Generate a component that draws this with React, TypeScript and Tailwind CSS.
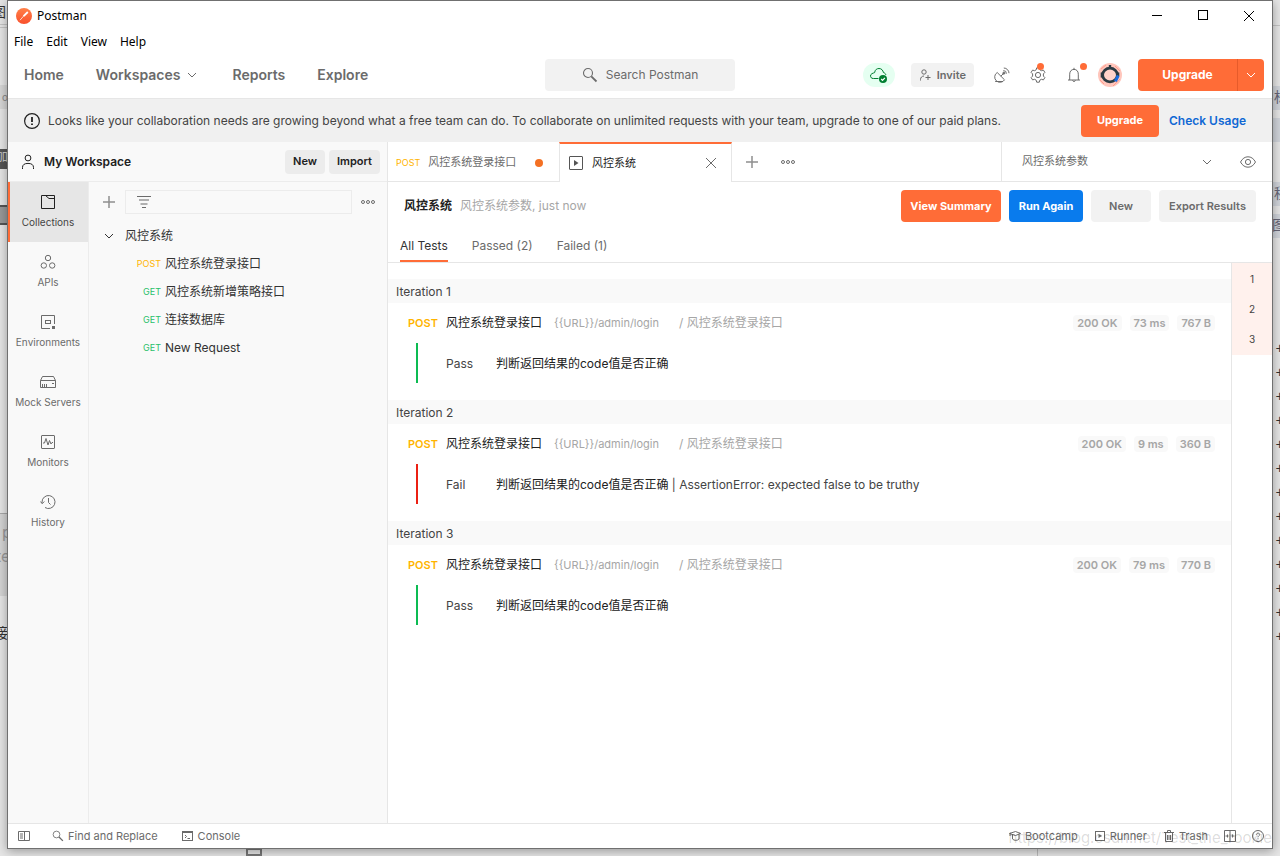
import { FC, ReactNode } from "react";

interface IconProps {
	className?: string;
	size?: number;
	children: ReactNode;
}

const Icon: FC<IconProps> = ({ className = "", size = 16, children }) => (
	<svg
		width={size}
		height={size}
		viewBox={`0 0 ${size} ${size}`}
		fill="none"
		stroke="currentColor"
		strokeWidth="1"
		className={`shrink-0 ${className}`}
		aria-hidden="true"
	>
		{children}
	</svg>
);

const ChevronIcon: FC<{ className?: string }> = ({ className }) => (
	<Icon className={className}>
		<path d="M4 6 L8 10 L12 6" />
	</Icon>
);

const SearchIcon: FC<{ className?: string; size?: number }> = ({ className, size = 16 }) => (
	<svg width={size} height={size} viewBox="0 0 16 16" fill="none" stroke="currentColor" className={className} aria-hidden="true">
		<circle cx="6" cy="6" r="4.5" strokeWidth="1.1" />
		<path d="M9.3 9.3 L14.5 14.5" strokeWidth="1.8" />
	</svg>
);

const PlusIcon: FC<{ className?: string }> = ({ className }) => (
	<Icon className={className}>
		<path d="M2 8 H14 M8 2 V14" strokeWidth="1.5" />
	</Icon>
);

const DotsIcon: FC<{ className?: string }> = ({ className }) => (
	<Icon className={className}>
		<circle cx="3" cy="8" r="1.5" />
		<circle cx="8" cy="8" r="1.5" />
		<circle cx="13" cy="8" r="1.5" />
	</Icon>
);

const CloseIcon: FC<{ className?: string }> = ({ className }) => (
	<Icon className={className}>
		<path d="M3 3 L13 13 M13 3 L3 13" />
	</Icon>
);

const LogoIcon = () => (
	<Icon>
		<defs>
			<linearGradient id="logo" x1="0" y1="0" x2="0" y2="1">
				<stop offset="0" stopColor="#ff8048" />
				<stop offset="1" stopColor="#f9502c" />
			</linearGradient>
		</defs>
		<circle cx="8" cy="8" r="8" fill="url(#logo)" stroke="none" />
		<path d="M4 12.2 L8.3 7.3" stroke="#ffd9c8" strokeWidth="1" />
		<path d="M7.6 8.2 L11.8 4" stroke="#fff" strokeWidth="1.8" />
	</Icon>
);

const CloudIcon = () => (
	<Icon size={18}>
		<path
			d="M8.5 12.5 H3.6 A2.6 2.6 0 0 1 2 7.6 C3 7 4 7 4.6 6.6 C5 3.6 7 2.5 9 2.5 C11.6 2.5 13 4.4 13.4 6.5 C15 7 15.8 8 15.8 9"
			stroke="#007f31"
		/>
		<circle cx="13" cy="13" r="4" fill="#007f31" stroke="none" />
		<path d="M11.2 13 L12.5 14.3 L14.9 11.8" stroke="#fff" strokeWidth="1.2" />
	</Icon>
);

const InviteIcon = () => (
	<Icon size={12}>
		<circle cx="5" cy="3" r="2.2" />
		<path d="M1.5 11.5 V10.5 C1.5 8.5 3 7 5 7 M9 6 V11 M6.5 8.5 H11.5" />
	</Icon>
);

const SatelliteIcon = () => (
	<Icon>
		<path d="M3.2 5.5 A5.3 5.3 0 1 0 10.5 12.8 Z M6.8 9.2 L9.4 6.6 M1.2 14.5 H9" />
		<circle cx="9.8" cy="6.2" r="1" fill="currentColor" />
		<path d="M9.3 3.6 A3 3 0 0 1 12.4 6.7 M9.8 1 A5.3 5.3 0 0 1 15 6.2" />
	</Icon>
);

const GearIcon = () => (
	<Icon>
		<path d="M6.7 0.8 H9.3 L9.8 2.8 L11.4 3.7 L13.4 3.1 L14.9 5.4 L13.4 6.9 V9.1 L14.9 10.6 L13.4 12.9 L11.4 12.3 L9.8 13.2 L9.3 15.2 H6.7 L6.2 13.2 L4.6 12.3 L2.6 12.9 L1.1 10.6 L2.6 9.1 V6.9 L1.1 5.4 L2.6 3.1 L4.6 3.7 L6.2 2.8 Z" />
		<circle cx="8" cy="8" r="2.6" />
	</Icon>
);

const BellIcon = () => (
	<Icon>
		<path d="M2 13 H14 M3.7 13 V7.2 C3.7 4.2 5.4 2.4 8 2.4 C10.6 2.4 12.3 4.2 12.3 7.2 V13 M8 2.4 V0.8 M6.5 13.4 A1.6 1.6 0 0 0 9.5 13.4" />
	</Icon>
);

const AvatarIcon = () => (
	<Icon size={24}>
		<circle cx="12" cy="12" r="12" fill="#ffc6bc" stroke="none" />
		<path d="M3 6 L8 2 M15 23 L22 16 M2 17 L6 21 M17 3 L22 8" stroke="#ff9d8c" />
		<path d="M12 2 V5" stroke="#2b3a42" strokeWidth="2.4" />
		<ellipse cx="12" cy="12" rx="7.4" ry="6.8" fill="#ffd3ca" stroke="#2b3a42" strokeWidth="2.8" />
		<path d="M3.5 9.5 V14.5 M20.5 9.5 V13" stroke="#2b3a42" strokeWidth="1.6" />
		<path d="M20.2 12.5 L17.4 18.4" stroke="#1a6ce0" strokeWidth="3" />
	</Icon>
);

const WarningIcon = () => (
	<Icon className="text-[#212121]">
		<circle cx="8" cy="8" r="7.4" strokeWidth="1.2" />
		<path d="M8 4 V9" strokeWidth="1.8" />
		<path d="M8 10.4 V12" strokeWidth="1.8" />
	</Icon>
);

const UserIcon = () => (
	<Icon className="text-[#212121]">
		<circle cx="8" cy="4" r="2.9" />
		<path d="M2.5 15 V13.5 C2.5 10.8 4.3 9.4 8 9.4 C11.7 9.4 13.5 10.8 13.5 13.5 V15" />
	</Icon>
);

const RunnerIcon: FC<{ className?: string }> = ({ className }) => (
	<Icon className={className}>
		<rect x="1.5" y="1.5" width="13" height="13" rx="0.5" />
		<path d="M6 5 L10.5 8 L6 11 Z" fill="currentColor" stroke="none" />
	</Icon>
);

const EyeIcon = () => (
	<Icon>
		<path d="M0.5 8 C2.5 4.4 5 2.8 8 2.8 C11 2.8 13.5 4.4 15.5 8 C13.5 11.6 11 13.2 8 13.2 C5 13.2 2.5 11.6 0.5 8 Z" />
		<circle cx="8" cy="8" r="2.6" />
	</Icon>
);

const sidebarItems: { label: string; icon: ReactNode }[] = [
	{
		label: "Collections",
		icon: <path d="M1.5 1.5 H14.5 V14.5 H1.5 Z M5.5 1.5 L9 4.5 H14.5" />,
	},
	{
		label: "APIs",
		icon: (
			<>
				<circle cx="8" cy="4" r="2.7" />
				<circle cx="3.8" cy="11.5" r="2.7" />
				<circle cx="12.2" cy="11.5" r="2.7" />
			</>
		),
	},
	{
		label: "Environments",
		icon: (
			<>
				<path d="M10 14.5 H1.5 V1.5 H14.5 V10" />
				<rect x="5.5" y="6.5" width="5" height="3" />
				<path d="M12 12 H15 V15 H12 Z" fill="currentColor" stroke="none" />
			</>
		),
	},
	{
		label: "Mock Servers",
		icon: (
			<path d="M0.5 6.5 L2.5 2.5 H13.5 L15.5 6.5 V13.5 H0.5 Z M0.5 6.5 H15.5 M2.5 10 V13 M4.5 10 V13 M6.5 10 V13 M12 9.5 H14" />
		),
	},
	{
		label: "Monitors",
		icon: (
			<>
				<rect x="1.5" y="1.5" width="13" height="13" rx="0.5" />
				<path d="M3 9 H4.5 L6 4.5 L8 11 L9.5 6.5 L11 10 L12 8.5 H13" />
			</>
		),
	},
	{
		label: "History",
		icon: <path d="M2 9.5 V8 A6.5 6.5 0 1 1 5 13.5 M0.3 7.5 L2.3 9.6 L4.3 7.5 M8.5 4 V8.5 L10.5 10.5" />,
	},
];

const requests = [
	{ method: "POST", name: "风控系统登录接口" },
	{ method: "GET", name: "风控系统新增策略接口" },
	{ method: "GET", name: "连接数据库" },
	{ method: "GET", name: "New Request" },
];

const iterations = [
	{ id: 1, passed: true, time: "73 ms", size: "767 B", error: "" },
	{ id: 2, passed: false, time: "9 ms", size: "360 B", error: "AssertionError: expected false to be truthy" },
	{ id: 3, passed: true, time: "79 ms", size: "770 B", error: "" },
];

// Slivers of the windows that lie behind the application
const Backdrop = () => (
	<div className="absolute inset-0 overflow-hidden bg-[#e6e6e6] text-sm text-[#333]" aria-hidden="true">
		<span className="absolute -left-2 top-0.5">图</span>
		<div className="absolute left-0 top-6 h-1 w-2 border-y border-[#c4c4c4]" />
		<div className="absolute left-0 top-[85px] h-6 w-2 bg-[#d6d6d6]" />
		<span className="absolute left-0.5 top-[90px] text-[10px] text-[#888]">of</span>
		<div className="absolute left-0 top-[149px] h-5 w-2 overflow-hidden bg-[#555]">
			<span className="absolute -left-1 top-0 text-xs text-[#ccc]">加</span>
		</div>
		<div className="absolute left-0 top-[205px] h-5 w-2 overflow-hidden border-y-2 border-[#555] bg-[#999]" />
		<div className="absolute left-0 top-[513px] h-[83px] w-2 border-t border-[#a8a8a8] bg-[#d4d4d4]" />
		<span className="absolute left-0.5 top-[520px] text-base text-[#999]">p</span>
		<span className="absolute -left-1 top-[544px] text-base text-[#999]">te</span>
		<span className="absolute -left-1.5 top-[623px]">接</span>
		<div className="absolute bottom-0 left-[246px] h-2 w-4 border-2 border-[#777]" />
		<div className="absolute bottom-0 right-0 h-2 w-[243px] border-l border-[#bbb]" />
		<div className="absolute right-0 top-[25px] h-px w-2 bg-[#c4c4c4]" />
		<div className="absolute right-0 top-[86px] h-6 w-2 bg-[#d0d4da]" />
		<div className="absolute right-0 top-[118px] h-6 w-2 bg-[#d0d4da]" />
		<div className="absolute right-0 top-[182px] h-6 w-2 bg-[#d0d4da]" />
		<div className="absolute right-0 top-[214px] h-6 w-2 bg-[#d0d4da]" />
		<span className="absolute -right-2 top-[87px] text-[#667]">标</span>
		<span className="absolute -right-2 top-[183px] text-[#667]">程</span>
		<span className="absolute -right-1.5 top-[215px] text-[#667]">图</span>
		<div className="absolute -right-1 top-[337px] font-['Liberation_Mono'] leading-6">
			{Array.from({ length: 13 }, (_, i) => (
				<div key={i}>+</div>
			))}
		</div>
	</div>
);

const TitleBar = () => (
	<div className="font-['Noto_Sans','Noto_Sans_CJK_SC',sans-serif] text-xs text-black">
		<div className="flex h-[30px] items-center pl-2">
			<LogoIcon />
			<span className="ml-[5px] flex-1">Postman</span>
			<button type="button" aria-label="Minimize" className="flex h-full w-[46px] items-center justify-center">
				<Icon>
					<path d="M3 7.5 H13" />
				</Icon>
			</button>
			<button type="button" aria-label="Maximize" className="flex h-full w-[46px] items-center justify-center">
				<Icon>
					<rect x="3.5" y="2.5" width="9" height="9" />
				</Icon>
			</button>
			<button type="button" aria-label="Close" className="flex h-full w-[46px] items-center justify-center">
				<CloseIcon />
			</button>
		</div>
		<div className="flex h-[21px] items-center gap-[13px] pl-1.5">
			<button type="button">File</button>
			<button type="button">Edit</button>
			<button type="button">View</button>
			<button type="button">Help</button>
		</div>
	</div>
);

const NavBar = () => (
	<header className="flex h-[47px] shrink-0 items-center border-b border-[#e6e6e6] px-2 text-[#6b6b6b]">
		<nav className="flex flex-1 items-center gap-8 text-sm font-semibold">
			<a href="#home" className="ml-2">
				Home
			</a>
			<button type="button" className="flex items-center gap-1">
				Workspaces
				<ChevronIcon />
			</button>
			<a href="#reports">Reports</a>
			<a href="#explore">Explore</a>
		</nav>
		<button type="button" className="flex h-8 w-[190px] items-center justify-center gap-2 rounded bg-[#f2f2f2] text-xs">
			<SearchIcon />
			Search Postman
		</button>
		<div className="flex flex-1 items-center justify-end">
			<button type="button" aria-label="Synced" className="flex h-6 w-8 items-center justify-center rounded-full bg-[#e5fff1]">
				<CloudIcon />
			</button>
			<button type="button" className="ml-4 flex h-6 items-center gap-1.5 rounded bg-[#f2f2f2] px-2 text-[11px] font-semibold">
				<InviteIcon />
				Invite
			</button>
			<button type="button" aria-label="Capture requests" className="ml-5">
				<SatelliteIcon />
			</button>
			<button type="button" aria-label="Settings" className="relative ml-5">
				<GearIcon />
				<span className="absolute -top-1 left-[7px] size-[7px] rounded-full bg-[#ff6c37]" />
			</button>
			<button type="button" aria-label="Notifications" className="relative ml-5">
				<BellIcon />
				<span className="absolute -right-[5px] -top-1 size-[7px] rounded-full bg-[#ff6c37]" />
			</button>
			<button type="button" aria-label="Account" className="ml-4">
				<AvatarIcon />
			</button>
			<div className="ml-4 flex h-8 overflow-hidden rounded bg-[#ff6c37] text-white">
				<button type="button" className="w-[99px] text-xs font-bold">
					Upgrade
				</button>
				<button type="button" aria-label="More plans" className="flex w-[27px] items-center justify-center border-l border-[#e65b2a]">
					<ChevronIcon />
				</button>
			</div>
		</div>
	</header>
);

const Banner = () => (
	<div className="flex h-[43px] shrink-0 items-center bg-[#f0f0f0] pl-4 pr-[26px] text-xs text-[#444]">
		<WarningIcon />
		<p className="ml-2 flex-1">
			Looks like your collaboration needs are growing beyond what a free team can do. To collaborate on unlimited requests with
			your team, upgrade to one of our paid plans.
		</p>
		<button type="button" className="h-8 w-[78px] rounded bg-[#ff6c37] text-[11px] font-bold text-white">
			Upgrade
		</button>
		<a href="#usage" className="ml-2.5 font-semibold text-[#1068d4]">
			Check Usage
		</a>
	</div>
);

const Sidebar = () => (
	<aside className="flex w-[380px] shrink-0 flex-col border-r border-[#e6e6e6] bg-[#f9f9f9]">
		<div className="flex h-10 items-center gap-1 border-b border-[#ececec] pl-3 pr-[7px] text-xs font-semibold text-[#212121]">
			<UserIcon />
			<span className="ml-1 flex-1">My Workspace</span>
			<button type="button" className="h-6 w-10 rounded bg-[#ececec] text-[11px]">
				New
			</button>
			<button type="button" className="h-6 w-[51px] rounded bg-[#ececec] text-[11px]">
				Import
			</button>
		</div>
		<div className="flex flex-1">
			<nav className="w-[81px] shrink-0 border-r border-[#ececec] text-[10px] text-[#6b6b6b]">
				{sidebarItems.map(({ label, icon }, index) => (
					<button
						key={label}
						type="button"
						className={`flex h-[60px] w-full flex-col items-center gap-1 whitespace-nowrap pt-3 leading-4 ${
							index === 0 ? "border-l-2 border-[#ff6c37] bg-[#e6e6e6] pr-0.5 text-[#444]" : ""
						}`}
					>
						<Icon className={index === 0 ? "text-[#212121]" : ""}>{icon}</Icon>
						{label}
					</button>
				))}
			</nav>
			<div className="flex-1">
				<div className="flex h-10 items-center pl-3 pr-[11px] text-[#6b6b6b]">
					<button type="button" aria-label="Create">
						<PlusIcon className="text-[#8f8f8f]" />
					</button>
					<label className="ml-2 flex h-6 flex-1 items-center border border-[#ececec] pl-2.5">
						<Icon>
							<path d="M1 2.5 H15" />
							<path d="M3 6 H13 M4.5 10 H11.5" strokeWidth="2" stroke="#b0b0b0" />
							<path d="M6 13.5 H10" />
						</Icon>
						<input type="text" aria-label="Filter collections" className="w-0 flex-1 bg-transparent px-2 text-xs outline-none" />
					</label>
					<button type="button" aria-label="View options" className="ml-2">
						<DotsIcon />
					</button>
				</div>
				<ul className="text-xs text-[#333]">
					<li>
						<button type="button" className="flex h-7 w-full items-center gap-2 pl-3">
							<ChevronIcon />
							风控系统
						</button>
					</li>
					{requests.map(({ method, name }) => (
						<li key={name}>
							<button type="button" className="flex h-7 w-full items-center gap-1 pl-8">
								<span className={`w-10 text-right text-[9px] ${method === "POST" ? "text-[#ffb400]" : "text-[#2ac06b]"}`}>
									{method}
								</span>
								{name}
							</button>
						</li>
					))}
				</ul>
			</div>
		</div>
	</aside>
);

const TabBar = () => (
	<div className="flex h-10 shrink-0 text-[11px]">
		<button
			type="button"
			className="flex w-[171px] items-center border-b border-t-2 border-b-[#e6e6e6] border-t-transparent pl-2 pr-4 text-[#6b6b6b]"
		>
			<span className="text-[9px] text-[#ffb400]">POST</span>
			<span className="ml-2 flex-1 text-left">风控系统登录接口</span>
			<span className="size-2 rounded-full bg-[#f47023]" />
		</button>
		<div className="flex w-[173px] items-center border-x border-t-2 border-x-[#e6e6e6] border-t-[#ff6c37] pl-2 pr-3 text-[#212121]">
			<RunnerIcon className="text-[#555]" />
			<span className="ml-2 flex-1">风控系统</span>
			<button type="button" aria-label="Close tab">
				<CloseIcon className="text-[#6b6b6b]" />
			</button>
		</div>
		<div className="flex flex-1 items-center gap-5 border-b border-[#e6e6e6] pl-3 text-[#6b6b6b]">
			<button type="button" aria-label="New tab">
				<PlusIcon className="text-[#8f8f8f]" />
			</button>
			<button type="button" aria-label="Tab options">
				<DotsIcon />
			</button>
		</div>
		<div className="flex w-[271px] items-center border-b border-l border-[#e6e6e6] pl-5 pr-4 text-[#6b6b6b]">
			<div className="relative flex flex-1 items-center">
				<select aria-label="Environment" className="w-full appearance-none bg-transparent outline-none">
					<option>风控系统参数</option>
				</select>
				<ChevronIcon className="pointer-events-none absolute right-0" />
			</div>
			<button type="button" aria-label="Environment quick look" className="ml-[25px]">
				<EyeIcon />
			</button>
		</div>
	</div>
);

const RunHeader = () => (
	<>
		<div className="flex h-12 shrink-0 items-center gap-2 px-4 text-xs">
			<h1 className="font-semibold text-[#212121]">风控系统</h1>
			<span className="flex-1 text-[#a6a6a6]">风控系统参数, just now</span>
			<button type="button" className="h-8 w-[100px] rounded bg-[#ff6c37] text-[11px] font-bold text-white">
				View Summary
			</button>
			<button type="button" className="h-8 w-[74px] rounded bg-[#097bed] text-[11px] font-bold text-white">
				Run Again
			</button>
			<button type="button" className="h-8 w-[60px] rounded bg-[#f2f2f2] text-[11px] font-semibold text-[#6b6b6b]">
				New
			</button>
			<button type="button" className="h-8 w-[97px] rounded bg-[#f2f2f2] text-[11px] font-semibold text-[#6b6b6b]">
				Export Results
			</button>
		</div>
		<div className="flex h-[33px] shrink-0 gap-6 border-b border-[#e6e6e6] pl-3 text-xs text-[#6b6b6b]">
			<button type="button" className="border-b-2 border-[#ff6c37] pt-0.5 text-[#333]">
				All Tests
			</button>
			<button type="button" className="border-b-2 border-transparent pt-0.5">
				Passed (2)
			</button>
			<button type="button" className="border-b-2 border-transparent pt-0.5">
				Failed (1)
			</button>
		</div>
	</>
);

const Results = () => (
	<div className="flex flex-1">
		<div className="flex flex-1 flex-col gap-[17px] pt-4 text-xs text-[#444]">
			{iterations.map(({ id, passed, time, size, error }) => (
				<section key={id}>
					<h2 className="h-6 bg-[#f9f9f9] pl-2 leading-[26px]">Iteration {id}</h2>
					<div className="flex h-10 items-center pl-5 pr-4">
						<span className="text-[11px] font-semibold text-[#ffb400]">POST</span>
						<span className="ml-2 text-[#212121]">风控系统登录接口</span>
						<span className="ml-3 text-[11px] text-[#a6a6a6]">{"{{URL}}/admin/login"}</span>
						<span className="ml-5 flex-1 text-[#a6a6a6]">/ 风控系统登录接口</span>
						<div className="flex gap-2 text-[11px] font-semibold leading-4 text-[#a6a6a6]">
							<span className="rounded bg-[#f9f9f9] px-1">200 OK</span>
							<span className="rounded bg-[#f9f9f9] px-1">{time}</span>
							<span className="rounded bg-[#f9f9f9] px-1">{size}</span>
						</div>
					</div>
					<div className={`ml-7 flex h-10 items-center border-l-2 pl-7 pt-0.5 ${passed ? "border-[#0cbb52]" : "border-[#eb2013]"}`}>
						<span className="w-[50px]">{passed ? "Pass" : "Fail"}</span>
						<span>
							<span className="text-[#212121]">判断返回结果的code值是否正确</span>
							{error && ` | ${error}`}
						</span>
					</div>
				</section>
			))}
		</div>
		<div className="w-[41px] shrink-0 border-l border-[#e6e6e6]">
			<div className="bg-[#fff1ed] py-px text-center text-[10px] text-[#444]">
				{iterations.map(({ id }) => (
					<button key={id} type="button" className="block h-[30px] w-full">
						{id}
					</button>
				))}
			</div>
		</div>
	</div>
);

const StatusBar = () => (
	<footer className="flex h-[25px] shrink-0 items-center border-t border-[#e6e6e6] px-2 text-[11px] text-[#6b6b6b]">
		<button type="button" aria-label="Toggle sidebar">
			<Icon>
				<path d="M2.5 3.5 H13.5 V12.5 H2.5 Z M8.5 3.5 V12.5 M4 6 H7 M4 8 H7 M4 10 H7" />
			</Icon>
		</button>
		<button type="button" className="ml-5 flex items-center gap-1">
			<SearchIcon size={12} />
			Find and Replace
		</button>
		<button type="button" className="ml-6 flex items-center gap-1">
			<Icon size={12}>
				<rect x="0.5" y="1.5" width="10" height="9" />
				<path d="M0 2 H11" strokeWidth="2" />
				<path d="M3 5 L4.5 6.5 L3 8 M5.5 8.5 H8" />
			</Icon>
			Console
		</button>
		<div className="flex flex-1 items-center justify-end gap-4">
			<button type="button" className="flex items-center gap-1">
				<Icon size={12}>
					<path d="M0.5 3.5 L6.5 1.5 L11.5 3.5 L6.5 5.5 Z M3.5 4.5 V9 C5 10.8 8.5 10.8 10 9 V4.5 M1 3.5 V6" />
				</Icon>
				Bootcamp
			</button>
			<button type="button" className="flex items-center gap-1">
				<Icon size={12}>
					<rect x="1.5" y="1.5" width="9" height="9" />
					<path d="M4.5 4 L8 6 L4.5 8 Z" fill="currentColor" stroke="none" />
				</Icon>
				Runner
			</button>
			<button type="button" className="flex items-center gap-1">
				<Icon size={12}>
					<path d="M1 2.5 H11 M4.5 2 V0.5 H7.5 V2 M2.5 3 V11.5 H9.5 V3 M4.5 5 V10 M6 5 V10 M7.5 5 V10" />
				</Icon>
				Trash
			</button>
			<button type="button" aria-label="Two pane view">
				<Icon size={12}>
					<path d="M0.5 0.5 H11.5 V11.5 H0.5 Z M6 0.5 V11.5 M1.5 6 H4.5 M7.5 6 H10.5 M3.5 4.5 V7.5 M8.5 4.5 V7.5" />
				</Icon>
			</button>
			<button type="button" aria-label="Help">
				<Icon size={12}>
					<circle cx="6" cy="6" r="5.5" />
					<path d="M4.3 4.8 C4.3 2.6 7.7 2.6 7.7 4.6 C7.7 5.8 6 5.8 6 7.3 M6 8.3 V9.3" />
				</Icon>
			</button>
		</div>
	</footer>
);

const App: FC = () => (
	<div className="relative h-screen w-full overflow-hidden pb-[7px] pl-[7px] pr-[7px] font-['Inter','Noto_Sans_CJK_SC',sans-serif]">
		<Backdrop />
		<div className="relative flex h-full flex-col border border-[#707070] bg-white shadow-[0_2px_10px_rgba(0,0,0,0.35)]">
			<TitleBar />
			<NavBar />
			<Banner />
			<div className="flex flex-1">
				<Sidebar />
				<main className="flex min-w-0 flex-1 flex-col">
					<TabBar />
					<RunHeader />
					<Results />
				</main>
			</div>
			<StatusBar />
			<span className="pointer-events-none absolute bottom-0 right-0 text-[15px] leading-5 text-black/15">
				https://blog.csdn.net/Test_the_rookie
			</span>
		</div>
	</div>
);

export default App;
